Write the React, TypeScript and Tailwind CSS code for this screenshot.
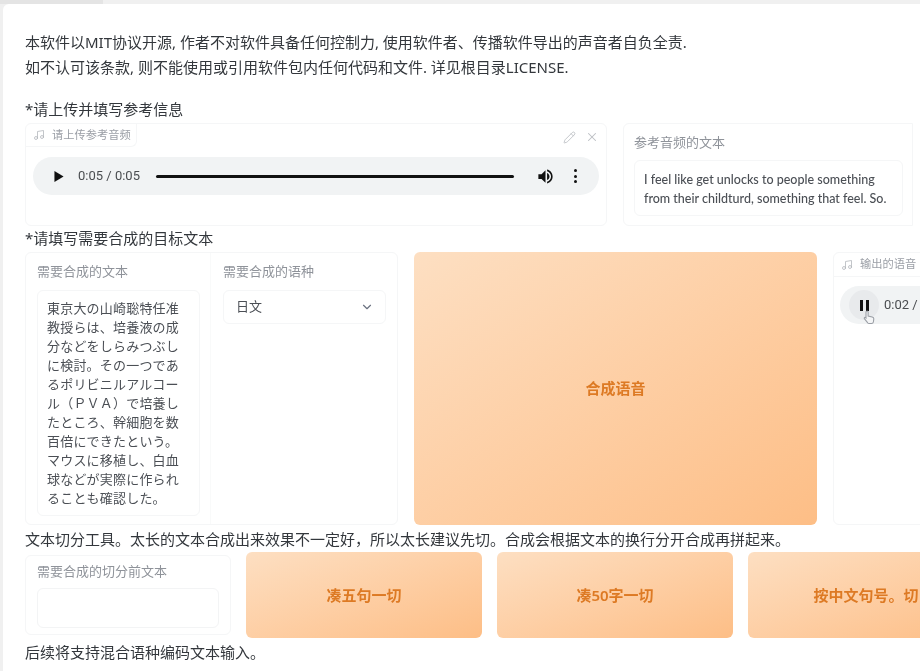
import { ChevronDown, Music, Pencil, X } from "lucide-react";

const jpLines = [
  "東京大の山崎聡特任准",
  "教授らは、培養液の成",
  "分などをしらみつぶし",
  "に検討。その一つであ",
  "るポリビニルアルコー",
  "ル（ＰＶＡ）で培養し",
  "たところ、幹細胞を数",
  "百倍にできたという。",
  "マウスに移植し、白血",
  "球などが実際に作られ",
  "ることも確認した。",
];

function AudioTag({ label, width }: { label: string; width: string }) {
  return (
    <div className={`flex h-[23px] items-center gap-[7px] rounded-br-md border-r border-b border-[#f5f6f7] pl-[7px] text-[11.250px] text-[#9b9fa6] ${width}`}>
      <Music className="h-3 w-3 text-[#b4b7bc]" strokeWidth={1.6} />
      <span className="whitespace-nowrap">{label}</span>
    </div>
  );
}

function Speaker() {
  return (
    <svg viewBox="0 0 24 24" className="h-[19px] w-[19px] fill-[#111]">
      <path d="M3 9v6h4l5 5V4L7 9H3z" />
      <path d="M14 7.500v9c1.800-.8 3-2.500 3-4.500s-1.200-3.700-3-4.500z" />
      <path d="M14 3.300v2.100c2.900.9 5 3.500 5 6.600s-2.100 5.700-5 6.600v2.100c4-.9 7-4.500 7-8.700s-3-7.800-7-8.700z" />
    </svg>
  );
}

function Kebab() {
  return (
    <div className="flex flex-col gap-[2.500px]">
      <div className="h-[3px] w-[3px] rounded-full bg-[#111]" />
      <div className="h-[3px] w-[3px] rounded-full bg-[#111]" />
      <div className="h-[3px] w-[3px] rounded-full bg-[#111]" />
    </div>
  );
}

function OrangeButton({ label, className }: { label: string; className: string }) {
  return (
    <div className={`flex flex-none items-center justify-center rounded-md bg-linear-to-br from-[#fddfc2] to-[#fdbe86] text-[15px] font-semibold text-[#dd7a24] ${className}`}>
      {label}
    </div>
  );
}

export default function App() {
  return (
    <div className="h-[671px] w-[920px] overflow-hidden bg-[#f0f0f0] font-['Noto_Sans','Noto_Sans_CJK_SC',sans-serif] blur-[0.6px]">
      <div className="h-[4px] w-[103px] bg-[#e4e4e4]" />
      <div className="ml-[3px] h-[667px] rounded-tl-md bg-white pt-[26px] pl-[22px] text-[#33373c]">
        <p className="text-[15px] leading-[25px]">本软件以MIT协议开源, 作者不对软件具备任何控制力, 使用软件者、传播软件导出的声音者自负全责.</p>
        <p className="text-[15px] leading-[25px]">如不认可该条款, 则不能使用或引用软件包内任何代码和文件. 详见根目录LICENSE.</p>

        <p className="mt-[19px] mb-[4px] text-[15px] leading-[20px]">*请上传并填写参考信息</p>
        <div className="flex h-[103px] gap-4">
          <div className="w-[582px] flex-none rounded-md border border-[#f5f6f7]">
            <div className="flex items-start justify-between">
              <AudioTag label="请上传参考音频" width="w-[111px]" />
              <div className="flex items-center gap-[9px] pt-[6px] pr-[7px] text-[#bcbfc4]">
                <Pencil className="h-[13px] w-[13px]" strokeWidth={1.6} />
                <X className="h-[14px] w-[14px]" strokeWidth={1.8} />
              </div>
            </div>
            <div className="mx-[7px] mt-[10px] flex h-[38px] items-center rounded-full bg-[#f1f3f4] pr-[22px] pl-[21px]">
              <svg viewBox="0 0 10 12" className="h-[11px] w-[10px] fill-[#111]">
                <path d="M0 0l10 6-10 6z" />
              </svg>
              <span className="ml-[14px] font-['Roboto',sans-serif] text-[13px] text-[#4a4d50]">0:05 / 0:05</span>
              <div className="ml-[16px] h-[3px] w-[358px] rounded-full bg-[#111]" />
              <div className="ml-[22px]">
                <Speaker />
              </div>
              <div className="ml-[19px]">
                <Kebab />
              </div>
            </div>
          </div>
          <div className="w-[290px] flex-none rounded-l-md border border-[#f5f6f7] px-[10px] pt-[9px]">
            <p className="text-[13px] leading-[18px] text-[#8f939a]">参考音频的文本</p>
            <div className="mt-[9px] h-[56px] w-[269px] rounded-md border border-[#f5f6f7] px-[9px] py-[9px] font-['Lato','Noto_Sans_CJK_SC',sans-serif] text-[12.500px] leading-[19px] font-medium text-[#4b4f55]">
              <p className="whitespace-nowrap">I feel like get unlocks to people something</p>
              <p className="whitespace-nowrap">from their childturd, something that feel. So.</p>
            </div>
          </div>
          <div className="w-[40px] flex-none border-l border-[#f5f6f7]" />
        </div>

        <p className="mt-[2px] mb-[4px] text-[15px] leading-[20px]">*请填写需要合成的目标文本</p>
        <div className="flex h-[273px] gap-4">
          <div className="flex w-[373px] flex-none rounded-md border border-[#f5f6f7]">
            <div className="w-[185px] flex-none border-r border-[#f9fafa] pt-[9px] pl-[11px]">
              <p className="text-[13px] leading-[18px] text-[#8f939a]">需要合成的文本</p>
              <div className="mt-[10px] h-[226px] w-[163px] rounded-md border border-[#f5f6f7] pt-[7px] pl-[9px] font-['Noto_Sans_CJK_JP',sans-serif] text-[13px] leading-[19px] tracking-[0.2px] text-[#4b4f55]">
                {jpLines.map((line) => (
                  <p key={line} className="whitespace-nowrap">{line}</p>
                ))}
              </div>
            </div>
            <div className="flex-1 pt-[9px] pl-[12px]">
              <p className="text-[13px] leading-[18px] text-[#8f939a]">需要合成的语种</p>
              <div className="mt-[10px] flex h-[34px] w-[163px] items-center justify-between rounded-md border border-[#f5f6f7] pr-[11px] pl-[12px] text-[13px] text-[#4b4f55]">
                <span>日文</span>
                <ChevronDown className="h-[14px] w-[14px] text-[#6b7280]" />
              </div>
            </div>
          </div>
          <OrangeButton label="合成语音" className="w-[403px]" />
          <div className="w-[120px] flex-none rounded-md border border-[#f5f6f7]">
            <div className="border-b border-[#f5f6f7]">
              <AudioTag label="输出的语音" width="w-[100px] border-b-0" />
            </div>
            <div className="relative mt-[9px] ml-[6px] flex h-[38px] items-center rounded-l-full bg-[#f1f3f4] pl-[9px]">
              <div className="flex h-[30px] w-[30px] items-center justify-center gap-[3px] rounded-full bg-[#e8eaec]">
                <div className="h-[11px] w-[3px] bg-[#111]" />
                <div className="h-[11px] w-[3px] bg-[#111]" />
              </div>
              <span className="ml-[5px] font-['Roboto',sans-serif] text-[13px] text-[#4a4d50]">0:02 /</span>
              <svg viewBox="0 0 16 18" className="absolute top-[23px] left-[23px] h-[16px] w-[13px] fill-[#f4f5f6] stroke-[#9a9ea5]" strokeWidth="1.300">
                <path d="M5 1.500c.8 0 1.300.6 1.300 1.400v5l5 1c1.300.3 2 1.200 2 2.400l-.5 3.700c-.2 1.200-1 2-2.300 2H7.500c-.8 0-1.400-.3-1.900-1L1.700 11c-.6-.8.5-2 1.500-1.300l.5.500V2.900c0-.8.500-1.400 1.300-1.400z" />
              </svg>
            </div>
          </div>
        </div>

        <p className="mt-[4px] text-[15px] leading-[20px]">文本切分工具。太长的文本合成出来效果不一定好，所以太长建议先切。合成会根据文本的换行分开合成再拼起来。</p>
        <div className="mt-[3px] flex h-[86px] gap-[15px]">
          <div className="my-[3px] w-[206px] flex-none rounded-md border border-[#f5f6f7] pt-[6px] pl-[11px]">
            <p className="text-[13px] leading-[18px] text-[#8f939a]">需要合成的切分前文本</p>
            <div className="mt-[8px] h-[40px] w-[182px] rounded-md border border-[#f3f4f5]" />
          </div>
          <OrangeButton label="凑五句一切" className="w-[236px]" />
          <OrangeButton label="凑50字一切" className="w-[236px]" />
          <OrangeButton label="按中文句号。切" className="w-[236px]" />
        </div>
        <p className="mt-[4px] text-[15px] leading-[20px]">后续将支持混合语种编码文本输入。</p>
      </div>
    </div>
  );
}
